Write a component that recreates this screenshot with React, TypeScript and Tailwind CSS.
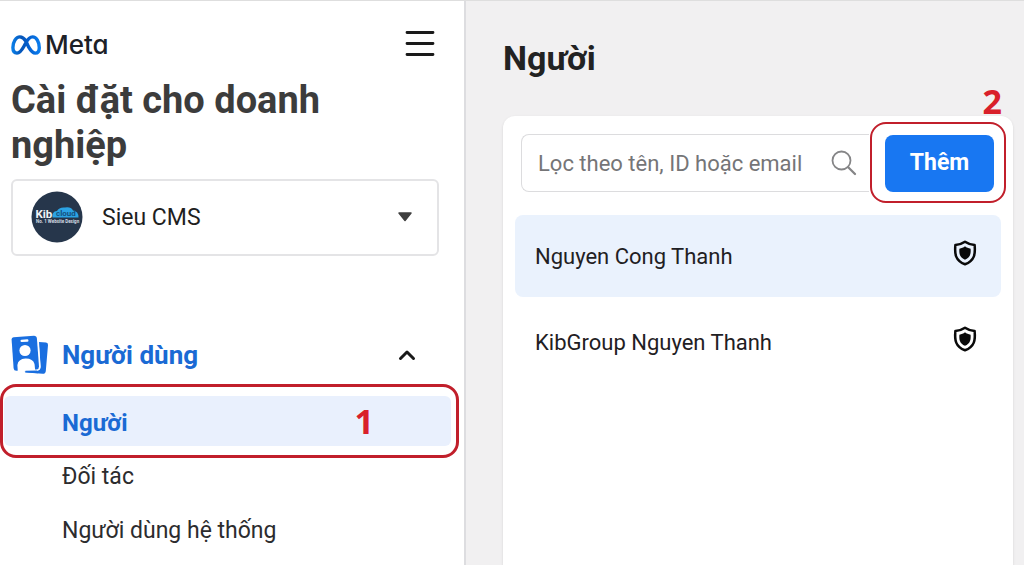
import React from "react";

const people = [
  { name: "Nguyen Cong Thanh", selected: true },
  { name: "KibGroup Nguyen Thanh", selected: false },
];

const links = [
  { label: "Người", active: true },
  { label: "Đối tác", active: false },
  { label: "Người dùng hệ thống", active: false },
];

function MetaMark() {
  return (
    <svg viewBox="0 0 30 20" className="h-5 w-[30px]" fill="none" aria-hidden="true">
      <defs>
        <linearGradient id="mark" x1="0" x2="30" y1="0" y2="0" gradientUnits="userSpaceOnUse">
          <stop offset="0" stopColor="#0a83ee" />
          <stop offset="0.35" stopColor="#0655b8" />
          <stop offset="0.6" stopColor="#0560cf" />
          <stop offset="1" stopColor="#0a80f2" />
        </linearGradient>
      </defs>
      <path
        d="M15 6.2C13 3.2 11.2 1.9 8.9 1.9C4.9 1.9 1.9 7 1.9 12.6C1.9 16.2 3.5 18.1 6 18.1C8.6 18.1 10.2 16.4 13 11.3L15 7.6C17 3.8 18.9 1.9 21.6 1.9C25.4 1.9 28.3 7 28.3 12.7C28.3 16.2 26.7 18.1 24.3 18.1C21.8 18.1 20.2 16.5 17.4 11.6Z"
        stroke="url(#mark)"
        strokeWidth="3.4"
        strokeLinejoin="round"
      />
    </svg>
  );
}

function BadgeIcon() {
  return (
    <svg viewBox="0 0 38 40" className="h-10 w-[38px] shrink-0" aria-hidden="true">
      <path d="M28 7L35 7.600Q37.200 7.900 37 10L34.800 36Q34.500 39 31.700 38.800L15 37.400Q12.500 36.900 12.800 36L26.500 35.300Q29.800 35 29.600 31.500Z" fill="#1a6fe0" />
      <path
        d="M2.500 2.200L23 0.800Q25.600 0.800 25.900 3.400L28 31.500Q28 34.200 25.500 34.500L5.300 35.800Q2.900 35.800 2.600 33.300L0.600 4.600Q0.500 2.500 2.500 2.200Z"
        fill="#1a6fe0"
        stroke="#fff"
        strokeWidth="3"
        paintOrder="stroke"
      />
      <rect x="9.500" y="4.500" width="8" height="2.400" rx="1.200" fill="#fff" transform="rotate(-4 13.500 6)" />
      <circle cx="14" cy="15.500" r="5.600" fill="#fff" />
      <path d="M6.800 37L6.400 30Q7 24 14.500 23.500Q22 23.400 23.500 29L24.300 36Z" fill="#fff" />
      <path d="M14 37.200L14.500 35.800L26 35.500L27 38.300Z" fill="#1a6fe0" />
    </svg>
  );
}

function ShieldIcon() {
  return (
    <svg viewBox="0 0 24 26" className="mb-1.5 h-[26px] w-6 shrink-0" role="img" aria-label="Admin">
      <path
        d="M12 1.700C9.400 3.500 6.200 4.600 2.400 4.900C1.500 13.800 2.300 20.800 12 24.300C21.700 20.800 22.500 13.800 21.600 4.900C17.800 4.600 14.600 3.500 12 1.700Z"
        fill="none"
        stroke="#0a0a0a"
        strokeWidth="2.500"
        strokeLinejoin="round"
      />
      <path d="M12 6.200C10.400 7.500 8.600 8.300 6.400 8.700C6 13.800 6.700 17.600 12 19.700C17.300 17.600 18 13.800 17.600 8.700C15.400 8.300 13.600 7.500 12 6.200Z" fill="#0a0a0a" />
    </svg>
  );
}

function AccountAvatar() {
  return (
    <svg viewBox="0 0 52 52" className="pointer-events-none absolute left-5 top-3 size-[52px]" aria-hidden="true">
      <circle cx="26" cy="26" r="25.500" fill="#26364b" />
      <path d="M21.500 26.500Q20.500 20.500 26 20Q28 16 34 16.500Q40 15.500 42 19.500Q47.500 20 47.500 26.500Z" fill="#2ba3e4" />
      <text x="4.500" y="26.500" fontSize="11.500" fontWeight="700" fill="#f1f4f7" fontFamily="Roboto, sans-serif">Kib</text>
      <text x="25" y="25" fontSize="8" fontWeight="700" fill="#15507c" fontFamily="Roboto, sans-serif">cloud</text>
      <text x="5" y="32" fontSize="4.500" fontWeight="700" fill="#d5dce4" fontFamily="Roboto, sans-serif">No. 1 Website Design</text>
    </svg>
  );
}

function Sidebar() {
  return (
    <aside className="w-[466px] shrink-0 border-r-2 border-[#dddde0] bg-white">
      <div className="px-[11px]">
        <header className="flex items-center justify-between pr-[15px] pt-6">
          <div className="flex items-center gap-1 pt-0.5">
            <MetaMark />
            <span className="font-['Inter',sans-serif] text-[26px] font-medium leading-9 text-[#1c2127] [font-feature-settings:'cv11']">Meta</span>
          </div>
          <button type="button" aria-label="Menu" className="flex size-9 items-center justify-center">
            <svg viewBox="0 0 30 28" className="h-7 w-[30px]" stroke="#1a1a1a" strokeWidth="2.800" strokeLinecap="round" aria-hidden="true">
              <path d="M2 2.500H28M2 13.500H28M2 24.500H28" />
            </svg>
          </button>
        </header>
        <h1 className="mt-[15px] pr-16 text-[38px] font-bold leading-[45px] text-[#3c3c3c]">Cài đặt cho doanh nghiệp</h1>
        <div className="relative mr-3.5 mt-[11px]">
          <select aria-label="Tài khoản doanh nghiệp" className="h-[77px] w-full appearance-none rounded-md border-2 border-[#e4e4e6] bg-white pl-[89px] pt-0.5 text-[23px] text-[#1f1f1f]">
            <option>Sieu CMS</option>
          </select>
          <AccountAvatar />
          <svg viewBox="0 0 16 10" className="pointer-events-none absolute right-[26px] top-[33px] h-2.5 w-4" aria-hidden="true">
            <path d="M2 1H14L8 8.500Z" fill="#3f3f3f" stroke="#3f3f3f" strokeWidth="1.500" strokeLinejoin="round" />
          </svg>
        </div>
      </div>

      <nav className="mt-[79px]">
        <button type="button" aria-expanded="true" className="flex h-10 w-full items-center gap-[13px] pl-[11px] pr-12 text-[26px] font-bold text-[#1a6ad4]">
          <BadgeIcon />
          <span>Người dùng</span>
          <svg viewBox="0 0 18 12" className="ml-auto h-3 w-[18px]" fill="none" aria-hidden="true">
            <path d="M2.500 9.500L9 3L15.500 9.500" stroke="#1a1a1a" strokeWidth="3" strokeLinecap="round" strokeLinejoin="round" />
          </svg>
        </button>
        <ul className="mt-[21px] flex flex-col gap-1 pl-1 pr-[13px]">
          {links.map((link) => (
            <li key={link.label} className="relative">
              <a
                href="#"
                className={
                  link.active
                    ? "flex h-[50px] items-center rounded-md bg-[#e9f0fd] pl-[58px] pt-1 text-2xl font-bold text-[#1a6ad4]"
                    : "flex h-[50px] items-center rounded-md pl-[58px] pt-1 text-[23px] text-[#2c2c2e]"
                }
              >
                {link.label}
              </a>
              {link.active && (
                <>
                  <span className="pointer-events-none absolute -inset-y-3 -left-1 -right-2 rounded-2xl border-[3px] border-[#c11f2b]" />
                  <span className="absolute right-[77px] top-0 font-['Noto_Sans',sans-serif] text-[34px] font-bold leading-[50px] text-[#d9202a]">1</span>
                </>
              )}
            </li>
          ))}
        </ul>
      </nav>
    </aside>
  );
}

function PeoplePanel() {
  return (
    <main className="flex min-w-0 flex-1 flex-col bg-[#f1f0f1] pl-[37px] pr-[11px] pt-[35px]">
      <h2 className="text-[34px] font-bold leading-[45px] text-[#222]">Người</h2>
      <section className="mt-[35px] flex-1 rounded-t-xl bg-white px-3 pt-[18px] shadow-sm">
        <div className="flex items-center pl-1.5 pr-[7px]">
          <div className="relative min-w-0 flex-1">
            <input
              type="text"
              aria-label="Lọc theo tên, ID hoặc email"
              placeholder="Lọc theo tên, ID hoặc email"
              className="h-[58px] w-full rounded-l-lg border border-r-0 border-[#dcdcde] bg-white pl-4 pr-12 text-[22px] text-[#222] placeholder:text-[#757577]"
            />
            <svg viewBox="0 0 26 26" className="pointer-events-none absolute right-3 top-4 size-[26px]" fill="none" stroke="#858587" strokeLinecap="round" aria-hidden="true">
              <circle cx="10.500" cy="10.500" r="9" strokeWidth="1.800" />
              <path d="M17.200 17.200L24 24" strokeWidth="2.300" />
            </svg>
          </div>
          <div className="relative ml-4">
            <button type="button" className="block h-[57px] w-[109px] rounded-lg bg-[#1877f2] text-[23px] font-bold text-white">Thêm</button>
            <span className="pointer-events-none absolute -bottom-[11px] -left-[15px] -right-3 -top-[13px] rounded-2xl border-2 border-[#c11f2b]" />
            <span className="absolute -right-2 -top-[59px] font-['Noto_Sans',sans-serif] text-[34px] font-bold leading-[50px] text-[#d9202a]">2</span>
          </div>
        </div>
        <ul className="mt-[23px] flex flex-col gap-1">
          {people.map((person) => (
            <li key={person.name}>
              <button
                type="button"
                className={
                  person.selected
                    ? "flex h-[82px] w-full items-center justify-between rounded-lg bg-[#eaf2fd] pl-5 pr-6 text-left text-[22px] text-[#1f2023]"
                    : "flex h-[82px] w-full items-center justify-between rounded-lg pl-5 pr-6 text-left text-[22px] text-[#1f2023]"
                }
              >
                <span>{person.name}</span>
                <ShieldIcon />
              </button>
            </li>
          ))}
        </ul>
      </section>
    </main>
  );
}

export default function App() {
  return (
    <div className="flex min-h-screen border-t border-[#dedede] font-['Roboto',sans-serif]">
      <Sidebar />
      <PeoplePanel />
    </div>
  );
}
